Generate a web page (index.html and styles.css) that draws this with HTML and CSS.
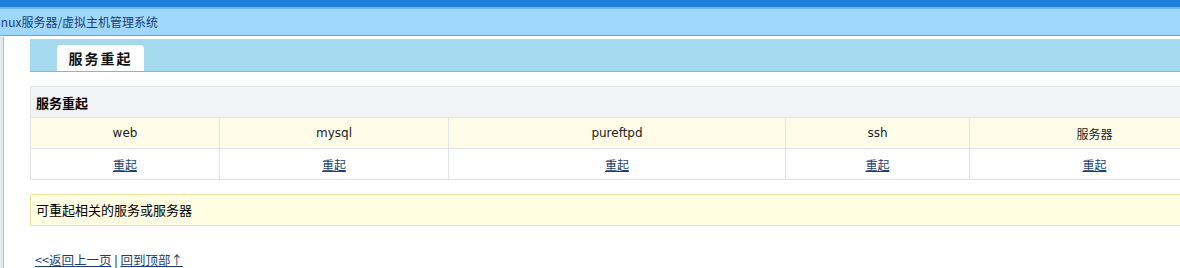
FILE: index.html
```html
<!DOCTYPE html>
<html lang="zh-CN">
<head>
    <meta charset="UTF-8">
    <title>服务重起</title>
    <link rel="stylesheet" href="styles.css">
</head>
<body>
    <div class="topbar"></div>
    <div class="titlebar"><span class="sitename">Linux服务器/虚拟主机管理系统</span></div>

    <div class="layout">
        <div class="side"></div>
        <div class="main">
            <div class="tabbar">
                <div class="tab">服务重起</div>
            </div>

            <table class="grid">
                <colgroup>
                    <col class="c1">
                    <col class="c2">
                    <col class="c3">
                    <col class="c4">
                    <col>
                </colgroup>
                <tr class="head">
                    <th colspan="5">服务重起</th>
                </tr>
                <tr class="names">
                    <td>web</td>
                    <td>mysql</td>
                    <td>pureftpd</td>
                    <td>ssh</td>
                    <td class="cjk">服务器</td>
                </tr>
                <tr class="actions">
                    <td><a href="#">重起</a></td>
                    <td><a href="#">重起</a></td>
                    <td><a href="#">重起</a></td>
                    <td><a href="#">重起</a></td>
                    <td><a href="#">重起</a></td>
                </tr>
            </table>

            <div class="note">可重起相关的服务或服务器</div>

            <div class="footer">
                <a href="#">&lt;&lt;返回上一页</a> | <a href="#">回到顶部↑</a>
            </div>
        </div>
    </div>
</body>
</html>
```

FILE: styles.css
```css
html, body {
    overflow: hidden;
}

body {
    margin: 0;
    font-family: "Noto Sans CJK SC", "DejaVu Sans", sans-serif;
    font-size: 13px;
    color: #000;
    background: #fff;
}

a {
    color: #1b3f72;
}

.topbar {
    height: 7px;
    background: #1f80d9;
    border-bottom: 2px solid #6cb4ec;
}

.titlebar {
    height: 26px;
    line-height: 25px;
    background: #9fd7fd;
    border-bottom: 1px solid #7fa2b2;
    overflow: hidden;
    white-space: nowrap;
}

.sitename {
    display: inline-block;
    margin-left: -9px;
    color: #1c3c6c;
    font-size: 12px;
}

.layout {
    display: flex;
    width: 1220px;
    padding-top: 1px;
}

.side {
    width: 3px;
    background: #e3eaee;
    border-right: 1px solid #a6c3d2;
    min-height: 240px;
}

.main {
    flex: 1;
    padding: 2px 0 0 26px;
}

.tabbar {
    height: 26px;
    padding-top: 6px;
    padding-left: 27px;
    background: #a5d9ee;
    border-bottom: 1px solid #9aafb9;
}

.tab {
    width: 87px;
    height: 26px;
    line-height: 27px;
    background: #fff;
    border-radius: 4px 4px 0 0;
    text-align: center;
    font-size: 14px;
    font-weight: bold;
    letter-spacing: 2px;
    color: #111;
}

.grid {
    width: 100%;
    margin-top: 14px;
    border-collapse: collapse;
    table-layout: fixed;
}

.grid th,
.grid td {
    height: 30px;
    padding: 0;
    border: 1px solid #e2e5e8;
}

.grid .head th {
    background: #f2f3f5;
    text-align: left;
    padding-left: 5px;
    font-size: 13px;
    font-weight: bold;
}

.grid .names td {
    background: #fffde9;
    text-align: center;
    font-family: "DejaVu Sans", sans-serif;
    font-size: 12px;
    color: #222;
}

.grid .names td.cjk {
    font-family: "Noto Sans CJK SC", sans-serif;
    font-size: 12px;
}

.grid .actions td {
    text-align: center;
    font-size: 12px;
}

.c1 { width: 189px; }
.c2 { width: 229px; }
.c3 { width: 337px; }
.c4 { width: 184px; }

.note {
    margin-top: 14px;
    height: 30px;
    line-height: 30px;
    padding-left: 5px;
    background: #fffde2;
    border: 1px solid #efe2a2;
    font-size: 13px;
}

.footer {
    margin-top: 26px;
    padding-left: 5px;
    font-size: 12.5px;
    line-height: 16px;
}
```
